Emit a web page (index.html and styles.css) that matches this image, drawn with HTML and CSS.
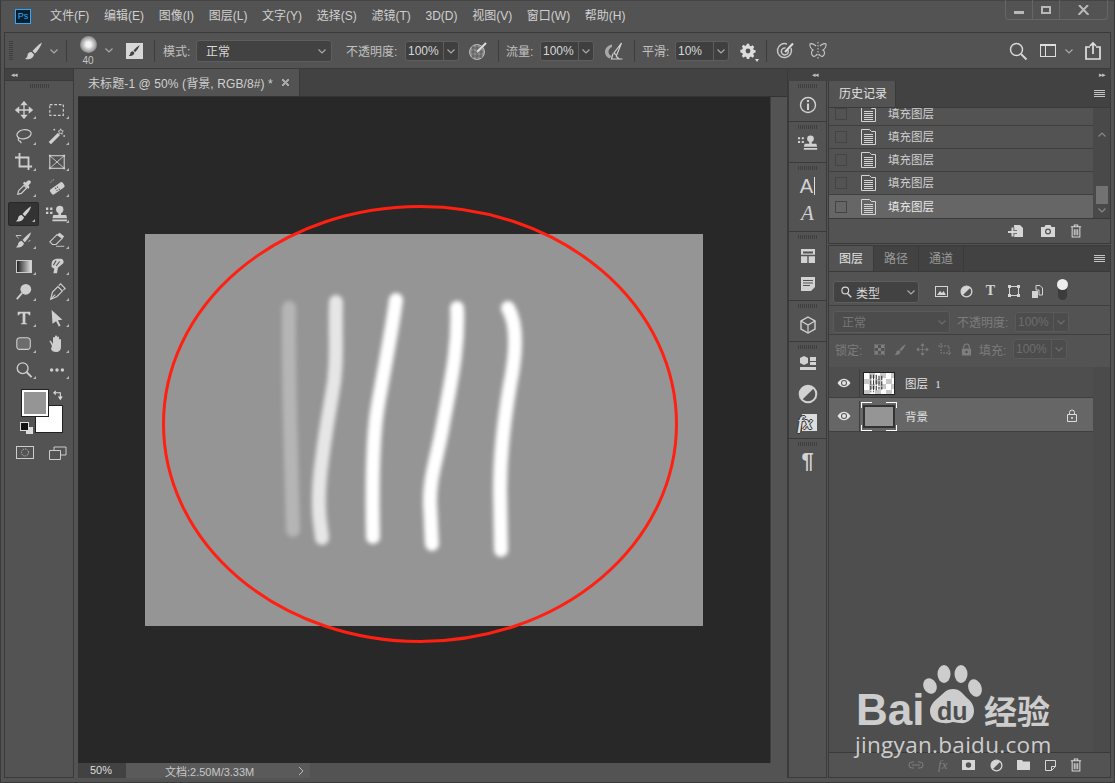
FILE: index.html
```html
<!DOCTYPE html>
<html lang="zh">
<head>
<meta charset="utf-8">
<title>Photoshop</title>
<link rel="stylesheet" href="styles.css">
</head>
<body>
<svg class="sprite" width="0" height="0">
  <defs>
    <symbol id="brush" viewBox="0 0 20 20"><path d="M18 1.500c-3.500 2-7 5.500-9.500 8.500l2.500 2.500c3-3 5.500-6.500 7-11z" fill="currentColor"/><path d="M7.500 11c-2.500 0-4 1.500-4 3.500 0 1.300-1 2.500-2.500 3.500 3.500 1 8 0 9-4.500z" fill="currentColor"/></symbol>
    <symbol id="chev" viewBox="0 0 10 10"><path d="M1.500 3.500L5 7l3.500-3.500" fill="none" stroke="currentColor" stroke-width="1.200"/></symbol>
    <symbol id="up" viewBox="0 0 10 10"><path d="M1.500 6.500L5 3l3.500 3.500" fill="none" stroke="currentColor" stroke-width="1.200"/></symbol>
    <symbol id="trash" viewBox="0 0 14 16"><path d="M1 3h12M5 3V1h4v2M2.500 3v12h9V3M5 6v7M7 6v7M9 6v7" fill="none" stroke="currentColor" stroke-width="1.200"/></symbol>
    <symbol id="doc" viewBox="0 0 15 16"><path d="M.5 15.500V.5h8l2 2h4v13z" fill="none" stroke="currentColor"/><path d="M3 5.500h9M3 7.500h9M3 9.500h9M3 11.500h9M3 13.500h9" stroke="currentColor"/></symbol>
    <symbol id="eye" viewBox="0 0 14 10"><path d="M.5 5C2.500 1.800 4.800.8 7 .8S11.500 1.800 13.500 5C11.500 8.200 9.200 9.200 7 9.200S2.500 8.200.5 5z" fill="currentColor"/><circle cx="7" cy="5" r="3" fill="#535353"/><circle cx="7" cy="5" r="2" fill="currentColor"/></symbol>
    <symbol id="menu" viewBox="0 0 11 8"><path d="M0 .5h11M0 2.500h11M0 4.500h11M0 6.500h11" stroke="currentColor"/></symbol>
    <symbol id="halfc" viewBox="0 0 14 14"><circle cx="7" cy="7" r="5.800" fill="none" stroke="currentColor" stroke-width="1.400"/><path d="M2.900 11.100L11.100 2.900A5.800 5.800 0 0 0 2.900 11.100z" fill="currentColor"/></symbol>
    <symbol id="lock" viewBox="0 0 12 14"><path d="M3 6V4a3 3 0 0 1 6 0v2" fill="none" stroke="currentColor" stroke-width="1.300"/><rect x="1" y="6" width="10" height="7.500" fill="currentColor"/><circle cx="6" cy="9.700" r="1.300" fill="#4e4e4e"/></symbol>
    <symbol id="spot" viewBox="0 0 16 16"><circle cx="7" cy="6" r="4.500" fill="none" stroke="currentColor" stroke-width="1.500"/><path d="M10 10l5 5" stroke="currentColor" stroke-width="1.800"/></symbol>
    <symbol id="stamp" viewBox="0 0 24 20"><path d="M0 3h2.500v2.500H0zM4.500 3H7v2.500H4.500zM0 7.500h2.500V10H0zM4.500 7.500H7V10H4.500z" fill="currentColor"/><circle cx="15" cy="5" r="4" fill="currentColor"/><path d="M13.500 8h3v3h5.500l1 3.500H7l1-3.500h5.500zM7 16h16v2H7z" fill="currentColor"/></symbol>
    <symbol id="grip" viewBox="0 0 19 4"><path d="M.5 0v4M2.500 0v4M4.500 0v4M6.500 0v4M8.500 0v4M10.500 0v4M12.500 0v4M14.500 0v4M16.500 0v4M18.500 0v4" stroke="currentColor"/></symbol>
  </defs>
</svg>

<div class="app">
  <header class="titlebar">
    <div class="ps-logo">Ps</div>
    <nav class="menu">
      <span>文件(F)</span><span>编辑(E)</span><span>图像(I)</span><span>图层(L)</span><span>文字(Y)</span><span>选择(S)</span><span>滤镜(T)</span><span>3D(D)</span><span>视图(V)</span><span>窗口(W)</span><span>帮助(H)</span>
    </nav>
    <div class="winbtns">
      <div class="winbtn"><span class="min"></span></div>
      <div class="winbtn"><span class="max"></span></div>
      <div class="winbtn wide"><svg width="11" height="10" viewBox="0 0 11 10"><path d="M1 0l9.500 10M10 0L.5 10" stroke="currentColor" stroke-width="2"/></svg></div>
    </div>
  </header>

  <div class="options">
    <div class="opt-grip"></div>
    <svg class="ic o-brush"><use href="#brush"/></svg>
    <svg class="chev o-chev1"><use href="#chev"/></svg>
    <div class="vsep s1"></div>
    <div class="brush-prev"><div class="brush-dot"></div><span>40</span></div>
    <svg class="chev o-chev2"><use href="#chev"/></svg>
    <div class="brush-panel"><svg width="13" height="13"><use href="#brush"/></svg></div>
    <div class="vsep s2"></div>
    <label class="lbl l-mode">模式:</label>
    <div class="sel s-mode"><span>正常</span><svg class="chev"><use href="#chev"/></svg></div>
    <label class="lbl l-op">不透明度:</label>
    <div class="num"><span>100%</span><i><svg class="chev"><use href="#chev"/></svg></i></div>
    <svg class="ic o-air" viewBox="0 0 20 20"><circle cx="9" cy="11" r="7.500" fill="#8a8a8a" stroke="#bbb"/><path d="M3 11h12M4 7h10M4 15h10M9 4v14M5 5v12M13 5v12" stroke="#5c5c5c"/><path d="M9 11l9-9" stroke="#ddd" stroke-width="2"/></svg>
    <div class="vsep s3"></div>
    <label class="lbl l-flow">流量:</label>
    <div class="num"><span>100%</span><i><svg class="chev"><use href="#chev"/></svg></i></div>
    <svg class="ic o-air2" viewBox="0 0 20 20"><path d="M8 3.500C3 4.500 1 8 1 11c0 3 2 5.500 4.500 6.500L7.500 15C5.500 14 4.500 12.500 4.500 10.500 4.500 8.500 6 7 8 6z" fill="#a8a8a8"/><path d="M17.500 2L10 12l2.500 2.500zM9 12.500l-1.500 5.500h11M12 15l3 3" fill="none" stroke="#d0d0d0" stroke-width="1.200"/></svg>
    <div class="vsep s4"></div>
    <label class="lbl l-smooth">平滑:</label>
    <div class="num"><span>10%</span><i><svg class="chev"><use href="#chev"/></svg></i></div>
    <div class="gear-wrap"><svg class="o-gear" viewBox="0 0 20 20"><path d="M8.500 1h3l.5 2.400 1.700.7 2-1.300 2.100 2.100-1.300 2 .7 1.700 2.300.4v3l-2.300.5-.7 1.700 1.300 2-2.100 2.100-2-1.300-1.700.7-.5 2.300h-3l-.4-2.300-1.700-.7-2 1.300-2.100-2.100 1.300-2-.7-1.700-2.400-.5V8.500l2.400-.4.7-1.700-1.300-2 2.100-2.100 2 1.300 1.700-.7z" fill="#ddd"/><circle cx="10" cy="10" r="3" fill="#535353"/></svg></div>
    <div class="vsep s5"></div>
    <svg class="ic o-target" viewBox="0 0 20 20"><path d="M15 7a7 7 0 1 1-4-4M12 9a3.500 3.500 0 1 1-2.500-2" fill="none" stroke="#c8c8c8" stroke-width="1.500"/><path d="M9 11l8-8.500" stroke="#ddd" stroke-width="2"/></svg>
    <svg class="ic o-fly" viewBox="0 0 20 20"><path d="M8 5C6 3 3 2 2 3c-.5 2 1 5 3 6-2 1-2 5 0 6 1 1 3 0 4-2M12 5c2-2 5-3 6-2 .5 2-1 5-3 6 2 1 2 5 0 6-1 1-3 0-4-2" fill="none" stroke="#c8c8c8" stroke-width="1.100"/><path d="M10 1v18" stroke="#c8c8c8" stroke-dasharray="1.500 1.500"/></svg>
    <svg class="ic o-search" viewBox="0 0 20 20"><circle cx="8.500" cy="8.500" r="6" fill="none" stroke="#d8d8d8" stroke-width="1.500"/><path d="M13 13l5.500 5.500" stroke="#d8d8d8" stroke-width="1.800"/></svg>
    <div class="o-work"><span></span></div>
    <svg class="chev o-chev3"><use href="#chev"/></svg>
    <svg class="ic o-share" viewBox="0 0 20 20"><path d="M7 6H3v12h14V6h-4" fill="none" stroke="#e0e0e0" stroke-width="1.700"/><path d="M10 13V2M7 5l3-3 3 3" fill="none" stroke="#e0e0e0" stroke-width="1.700"/></svg>
  </div>

  <div class="workspace">
    <aside class="tools">
      <div class="strip"><span class="arrows">◂◂</span></div>
      <svg class="grip-t"><use href="#grip"/></svg>
      <div class="tool-grid">
        <div class="t corner"><svg viewBox="0 0 20 20"><path d="M10 1v18M1 10h18M10 1L7.500 4h5zM10 19l-2.500-3h5zM1 10l3-2.500v5zM19 10l-3-2.500v5z" fill="currentColor" stroke="currentColor" stroke-width="1.500"/></svg></div>
        <div class="t corner"><svg viewBox="0 0 20 20"><rect x="2" y="4" width="15" height="12" fill="none" stroke="currentColor" stroke-width="1.300" stroke-dasharray="3 2"/></svg></div>
        <div class="t corner"><svg viewBox="0 0 20 20"><ellipse cx="10" cy="8" rx="8" ry="5" transform="rotate(-10 10 8)" fill="none" stroke="currentColor" stroke-width="1.300"/><path d="M4 12c-1 2 0 4 2 4l1 2" fill="none" stroke="currentColor" stroke-width="1.300"/></svg></div>
        <div class="t corner"><svg viewBox="0 0 20 20"><path d="M2 18L12 8" stroke="currentColor" stroke-width="3.500"/><path d="M14 2l1 2 2 .5-1.500 1.500.3 2-1.800-1-1.800 1 .3-2-1-1.500 2-.5zM6 3h2M7 2v2M18 9v2M17 10h2" stroke="currentColor" fill="none" stroke-width="1"/></svg></div>
        <div class="t corner"><svg viewBox="0 0 20 20"><path d="M0 5h15v14M5 0v15h14" fill="none" stroke="currentColor" stroke-width="2"/></svg></div>
        <div class="t corner"><svg viewBox="0 0 20 20"><rect x="2" y="3" width="16" height="14" fill="none" stroke="currentColor" stroke-width="1.200"/><path d="M2 3l16 14M18 3L2 17" stroke="currentColor"/><path d="M1 2h2v2H1zM17 2h2v2h-2zM1 16h2v2H1zM17 16h2v2h-2z" fill="currentColor"/></svg></div>
        <div class="t corner"><svg viewBox="0 0 20 20"><path d="M3 17l1-4 6-6 3 3-6 6z" fill="none" stroke="currentColor" stroke-width="1.300"/><path d="M9 5l6 6 1-2-1-2 2-2a2 2 0 0 0-3-3l-2 2-2-1z" fill="currentColor"/></svg></div>
        <div class="t corner"><svg viewBox="0 0 20 20"><rect x="1.500" y="7" width="17" height="7" rx="2" transform="rotate(-35 10 10)" fill="currentColor"/><path d="M8 10l1 1M10 8.500l1 1M9.500 12l1 1M12 11l1 1" stroke="#535353" stroke-width="1.300"/><path d="M3 4a4 4 0 0 1 4-3" fill="none" stroke="currentColor" stroke-dasharray="1 1"/></svg></div>
        <div class="t corner on"><svg viewBox="0 0 20 20"><use href="#brush"/></svg></div>
        <div class="t corner t-wide"><svg viewBox="0 0 24 20"><use href="#stamp"/></svg></div>
        <div class="t corner"><svg viewBox="0 0 20 20"><use href="#brush"/><path d="M1 5h6M1 5l3 3M15 12l2-2" stroke="currentColor" fill="none"/></svg></div>
        <div class="t corner"><svg viewBox="0 0 20 20"><path d="M2 12l8-8 6 4-7 7H5z" fill="none" stroke="currentColor" stroke-width="1.200"/><path d="M10 4l3-2 5 4-2 2z" fill="currentColor"/><path d="M9 17h9" stroke="currentColor"/></svg></div>
        <div class="t corner"><div class="grad"></div></div>
        <div class="t corner"><svg viewBox="0 0 20 20"><path d="M4 8c0-4 3-6 7-6h4c2 1 3 3 2 5l-6 5-1 6H6l1-5-3-2z" fill="currentColor"/><path d="M9 4l-3 5M13 5l-4 5" stroke="#535353" stroke-width="1.200"/></svg></div>
        <div class="t corner"><svg viewBox="0 0 20 20"><path d="M2 18l6-7" stroke="currentColor" stroke-width="2"/><circle cx="12" cy="7" r="6" fill="currentColor"/></svg></div>
        <div class="t corner"><svg viewBox="0 0 20 20"><path d="M3 18l2-8 6-6 5 5-6 6z" fill="none" stroke="currentColor" stroke-width="1.300"/><path d="M3 18l5-5M12 3l2-2 5 5-2 2" stroke="currentColor" fill="none" stroke-width="1.300"/></svg></div>
        <div class="t corner"><svg viewBox="0 0 20 20"><path d="M3 3h14v4h-1.500c-.5-1.500-1-2-2.500-2h-1.500v10.500l2 .5v1H6.500v-1l2-.5V5H7C5.500 5 5 5.500 4.500 7H3z" fill="currentColor"/></svg></div>
        <div class="t corner"><svg viewBox="0 0 20 20"><path d="M4 1l12 11-5 .5 3 6-2 1-3-6-4 3z" fill="currentColor"/></svg></div>
        <div class="t corner"><svg viewBox="0 0 20 20"><rect x="2" y="3" width="15" height="13" rx="3.500" fill="#6c6c6c" stroke="currentColor" stroke-width="1.200"/></svg></div>
        <div class="t corner t-wide"><svg viewBox="0 0 20 20"><path d="M5 12L3 8c-1-1.500 0-2 1-1l2 3V4c0-1.500 2-1.500 2 0v4V2.500c0-1.500 2-1.500 2 0V8V3.500c0-1.500 2-1.500 2 0V9V6c0-1.500 2-1.500 2 0v7c0 3-2 5-5 5s-4-1-5-3z" fill="currentColor"/></svg></div>
        <div class="t corner"><svg viewBox="0 0 20 20"><circle cx="8.500" cy="8" r="6" fill="none" stroke="currentColor" stroke-width="1.500"/><path d="M13 12.500l5.500 5.500" stroke="currentColor" stroke-width="2"/></svg></div>
        <div class="t corner"><svg viewBox="0 0 20 20"><circle cx="4" cy="10" r="1.900" fill="currentColor"/><circle cx="10" cy="10" r="1.900" fill="currentColor"/><circle cx="16" cy="10" r="1.900" fill="currentColor"/></svg></div>
      </div>
      <div class="swatches">
        <div class="bg-sw"></div>
        <div class="fg-sw"></div>
        <svg class="swap" viewBox="0 0 12 12"><path d="M1 3h7v6M6 7l2 3 2-3M3 1L1 3l2 2" fill="none" stroke="#ddd" stroke-width="1.200"/></svg>
        <div class="def-bg"></div>
        <div class="def-fg"></div>
      </div>
      <div class="tool-bottom">
        <svg width="18" height="14" viewBox="0 0 18 14"><rect x=".5" y=".5" width="17" height="12" fill="none" stroke="#ccc"/><circle cx="9" cy="6.500" r="3.500" fill="none" stroke="#ccc" stroke-dasharray="1 1"/></svg>
        <svg width="18" height="14" viewBox="0 0 18 14"><path d="M5 4V1h12v8h-5M.5 4.500h11v9H.5z" fill="none" stroke="#ccc"/></svg>
      </div>
    </aside>

    <main class="doc">
      <div class="tabs">
        <div class="tab"><span>未标题-1 @ 50% (背景, RGB/8#) *</span><b></b></div>
      </div>
      <div class="stage">
        <svg class="canvas" viewBox="78 97 692 666" width="692" height="666">
          <defs><filter id="soft" x="-30%" y="-5%" width="160%" height="110%"><feGaussianBlur stdDeviation="2"/></filter></defs>
          <rect x="145" y="234" width="558" height="392" fill="#959595"/>
          <g fill="none" stroke-linecap="round" stroke-width="14" filter="url(#soft)">
            <path d="M289 308C288 380 291 450 293 530" stroke="#b5b5b5"/>
            <path d="M336 302C335 340 338 365 332 395C326 430 319 470 319 495C318 520 321 525 322 538" stroke="#e6e6e6"/>
            <path d="M396 300C392 330 384 370 378 405C372 440 372 490 373 537" stroke="#fff"/>
            <path d="M457 308C459 350 450 385 442 430C436 462 429 480 430 505C431 520 431 530 432 544" stroke="#fff"/>
            <path d="M508 308C518 325 516 355 510 385C504 420 500 450 500 490L501 550" stroke="#fff"/>
          </g>
          <ellipse cx="420" cy="424" rx="256.500" ry="217.500" fill="none" stroke="#ff2012" stroke-width="3"/>
        </svg>
        <div class="vscroll"></div>
      </div>
      <div class="status">
        <span class="zoom">50%</span>
        <div class="info"><span>文档:2.50M/3.33M</span><svg width="6" height="10" viewBox="0 0 6 10"><path d="M1 1l4 4-4 4" fill="none" stroke="#bbb"/></svg></div>
      </div>
    </main>

    <div class="right">
      <div class="strip strip-r"><span class="arrows a-l">◂◂</span><span class="arrows a-r">▸▸</span></div>
      <div class="right-body">
        <div class="dock">
          <section class="dk h41"><svg class="grip-d"><use href="#grip"/></svg><svg class="di" viewBox="0 0 20 20"><circle cx="10" cy="10" r="7.500" fill="none" stroke="currentColor" stroke-width="1.400"/><path d="M9 5h2v2H9zM9 8.500h2V15H9z" fill="currentColor"/></svg></section>
          <section class="dk h41"><svg class="grip-d"><use href="#grip"/></svg><svg class="di up3" viewBox="0 0 24 20"><use href="#stamp"/></svg></section>
          <section class="dk h69"><svg class="grip-d"><use href="#grip"/></svg><div class="glyph-a">A<em></em></div><div class="glyph-fancy">A</div></section>
          <section class="dk h69"><svg class="grip-d"><use href="#grip"/></svg>
            <svg class="di" viewBox="0 0 20 20"><path d="M3 3h14v14H3z" fill="currentColor"/><path d="M3 9.500h14M10 9.500V17" stroke="#535353" stroke-width="1.400"/><path d="M5 5.500h10v2H5z" fill="#535353"/></svg>
            <svg class="di" viewBox="0 0 20 20"><path d="M3 3h14v10l-4 4H3z" fill="currentColor"/><path d="M5 6.500h10M5 9h10M5 11.500h7" stroke="#535353"/></svg>
          </section>
          <section class="dk h41"><svg class="grip-d"><use href="#grip"/></svg><svg class="di" viewBox="0 0 20 20"><path d="M10 2l7 4v8l-7 4-7-4V6z" fill="none" stroke="currentColor" stroke-width="1.400"/><path d="M3 6l7 4 7-4M10 10v8" fill="none" stroke="currentColor" stroke-width="1.200"/></svg></section>
          <section class="dk h97"><svg class="grip-d"><use href="#grip"/></svg>
            <svg class="di up2" viewBox="0 0 20 20"><path d="M6 2l4 2v5l-4 2-4-2V4zM12 3h6v4h-6zM12 8h6v3h-6zM2 13h16v3H2z" fill="currentColor"/></svg>
            <svg class="di" viewBox="0 0 14 14"><use href="#halfc"/></svg>
            <div class="fx-box"><span>fx</span></div>
          </section>
          <section class="dk grow"><svg class="grip-d"><use href="#grip"/></svg><div class="pilcrow">¶</div></section>
        </div>

        <div class="panels">
          <section class="panel history">
            <div class="ptabs">
              <div class="ptab active">历史记录</div>
              <svg class="pmenu"><use href="#menu"/></svg>
            </div>
            <div class="hist-body">
              <div class="hist-list">
                <div class="hrow"><i class="cb"></i><svg class="hdoc"><use href="#doc"/></svg><span>填充图层</span></div>
                <div class="hrow"><i class="cb"></i><svg class="hdoc"><use href="#doc"/></svg><span>填充图层</span></div>
                <div class="hrow"><i class="cb"></i><svg class="hdoc"><use href="#doc"/></svg><span>填充图层</span></div>
                <div class="hrow"><i class="cb"></i><svg class="hdoc"><use href="#doc"/></svg><span>填充图层</span></div>
                <div class="hrow sel-row"><i class="cb"></i><svg class="hdoc"><use href="#doc"/></svg><span>填充图层</span></div>
              </div>
              <div class="hscroll">
                <svg class="sa"><use href="#up"/></svg>
                <div class="thumb"></div>
                <svg class="sa"><use href="#chev"/></svg>
              </div>
            </div>
            <div class="pfoot pf-hist">
              <svg class="f-new" width="15" height="13" viewBox="0 0 15 13"><path d="M6 0h6l3 3v9H6z" fill="currentColor"/><path d="M0 7h9M4.500 2.500v9" stroke="#535353" stroke-width="3.600"/><path d="M0 7h9M4.500 2.500v9" stroke="currentColor" stroke-width="2"/></svg>
              <svg width="14" height="12" viewBox="0 0 14 12"><path d="M0 2h3.500l1-2h5l1 2H14v10H0z" fill="currentColor"/><circle cx="7" cy="6.500" r="3" fill="#535353"/><circle cx="7" cy="6.500" r="1.700" fill="currentColor"/></svg>
              <svg width="12" height="14"><use href="#trash"/></svg>
            </div>
          </section>

          <section class="panel layers">
            <div class="ptabs">
              <div class="ptab active">图层</div>
              <div class="ptab">路径</div>
              <div class="ptab">通道</div>
              <svg class="pmenu"><use href="#menu"/></svg>
            </div>
            <div class="lrow-filter">
              <div class="sel s-filter"><svg width="12" height="12" viewBox="0 0 16 16"><use href="#spot"/></svg><span>类型</span><svg class="chev"><use href="#chev"/></svg></div>
              <div class="f-icons">
                <svg width="13" height="11" viewBox="0 0 13 11"><rect x=".5" y=".5" width="12" height="10" fill="none" stroke="currentColor"/><path d="M2 9l3-4 2 2 1.500-2L11 9z" fill="currentColor"/></svg>
                <svg width="13" height="13"><use href="#halfc"/></svg>
                <div class="f-t">T</div>
                <svg width="12" height="12" viewBox="0 0 12 12"><rect x="1.500" y="1.500" width="9" height="9" fill="none" stroke="currentColor"/><path d="M0 0h3v3H0zM9 0h3v3H9zM0 9h3v3H0zM9 9h3v3H9z" fill="currentColor"/></svg>
                <svg width="11" height="13" viewBox="0 0 11 13"><path d="M4 .5h4l2.500 2.500v7H7V5H4z" fill="none" stroke="currentColor"/><rect x="0" y="6" width="6" height="7" fill="currentColor"/></svg>
                <div class="toggle"><b></b></div>
              </div>
            </div>
            <div class="lrow-blend dim">
              <div class="sel s-blend"><span>正常</span><svg class="chev"><use href="#chev"/></svg></div>
              <label class="lbl d1">不透明度:</label>
              <div class="num n-dim"><span>100%</span><i><svg class="chev"><use href="#chev"/></svg></i></div>
            </div>
            <div class="lrow-lock dim">
              <label class="lbl d2">锁定:</label>
              <div class="lk-icons">
                <svg width="11" height="11" viewBox="0 0 11 11"><path d="M0 0h11v11H0z" fill="none" stroke="currentColor"/><path d="M1 1h3v3H1zM7 1h3v3H7zM4 4h3v3H4zM1 7h3v3H1zM7 7h3v3H7z" fill="currentColor"/></svg>
                <svg width="13" height="13"><use href="#brush"/></svg>
                <svg width="13" height="13" viewBox="0 0 20 20"><path d="M10 1v18M1 10h18M10 1L7.500 4h5zM10 19l-2.500-3h5zM1 10l3-2.500v5zM19 10l-3-2.500v5z" fill="currentColor" stroke="currentColor"/></svg>
                <svg width="14" height="13" viewBox="0 0 14 13"><path d="M0 3h11v10M3 0v10h11" fill="none" stroke="currentColor" stroke-dasharray="2 1"/></svg>
                <svg width="11" height="13"><use href="#lock"/></svg>
              </div>
              <label class="lbl d3">填充:</label>
              <div class="num n-dim"><span>100%</span><i><svg class="chev"><use href="#chev"/></svg></i></div>
            </div>
            <div class="lay-body">
              <div class="lay-list">
                <div class="layer">
                  <div class="eye"><svg width="14" height="10"><use href="#eye"/></svg></div>
                  <div class="thumb-l check"><svg viewBox="0 0 32 23" width="30" height="21"><path d="M7 2v19M10 2v19M13 2v17M16 3v15M19 3v15" stroke="#333" stroke-width="1.200" stroke-dasharray="5 1"/></svg></div>
                  <span class="lname">图层 <em>1</em></span>
                </div>
                <div class="layer cur">
                  <div class="eye"><svg width="14" height="10"><use href="#eye"/></svg></div>
                  <div class="thumb-l gray"><i class="c tl"></i><i class="c tr"></i><i class="c bl"></i><i class="c br"></i></div>
                  <span class="lname">背景</span>
                  <svg class="lay-lock" width="10" height="13" viewBox="0 0 10 13"><path d="M2.500 5.500V3.500a2.500 2.500 0 0 1 5 0v2M.5 5.500h9v7h-9z" fill="none" stroke="#ddd"/><circle cx="5" cy="9" r="1" fill="#ddd"/></svg>
                </div>
              </div>
              <div class="lay-scroll"></div>
            </div>
            <div class="pfoot pf-lay">
              <svg class="f-d" width="16" height="8" viewBox="0 0 16 8"><path d="M6 1H4a3 3 0 0 0 0 6h2M10 1h2a3 3 0 0 1 0 6h-2M4 4h8" fill="none" stroke="currentColor"/></svg>
              <span class="fx-d">fx</span>
              <svg width="13" height="10" viewBox="0 0 13 10"><path d="M0 0h13v10H0z" fill="currentColor"/><circle cx="6.500" cy="5" r="2.700" fill="#535353"/></svg>
              <svg width="13" height="13"><use href="#halfc"/></svg>
              <svg width="13" height="10" viewBox="0 0 13 10"><path d="M0 0h5l1 1.500h7V10H0z" fill="currentColor"/></svg>
              <svg width="11" height="11" viewBox="0 0 11 11"><path d="M.5 .5h10v6l-4 4h-6zM6.500 10.500v-4h4" fill="none" stroke="currentColor"/></svg>
              <svg width="12" height="14"><use href="#trash"/></svg>
            </div>
          </section>
        </div>
      </div>
    </div>
  </div>

  <div class="watermark">
    <span class="wm-bai">Bai</span>
    <svg class="wm-paw" viewBox="0 0 60 63"><ellipse cx="7" cy="24" rx="6.500" ry="8" transform="rotate(-25 7 24)"/><ellipse cx="21" cy="12" rx="6.500" ry="9"/><ellipse cx="38" cy="12" rx="6.500" ry="9"/><ellipse cx="52" cy="26" rx="6.500" ry="9" transform="rotate(-20 52 26)"/><path d="M30 27c7 0 10 5 14 9 5 4 7 8 7 13 0 8-7 13-14 12-3 0-5-1-7-1s-5 2-9 1C12 61 7 56 7 49c0-5 3-9 8-13 5-4 8-9 15-9z"/></svg>
    <span class="wm-du">du</span>
    <span class="wm-jy">经验</span>
    <span class="wm-url">jingyan.baidu.com</span>
  </div>
</div>
</body>
</html>
```
FILE: styles.css
```css
* { box-sizing: border-box; }
html, body { margin: 0; padding: 0; height: 100%; overflow: hidden; }
body {
  background: #535353;
  color: #d2d2d2;
  font: 12px "Liberation Sans", "Noto Sans CJK SC", sans-serif;
}
.sprite { position: absolute; }
svg { display: block; flex: none; }
.app {
  position: relative;
  width: 1115px;
  height: 783px;
  display: flex;
  flex-direction: column;
  background: #535353;
  border: 1px solid #3a3a3a;
  border-top-color: #444;
}

/* title bar */
.titlebar { height: 31px; display: flex; align-items: center; flex: none; position: relative; }
.ps-logo {
  width: 16px; height: 15px; margin-left: 14px; margin-top: -1px;
  background: #06202e;
  border: 1px solid #31a8ff;
  color: #31a8ff;
  font-size: 9px;
  line-height: 13px;
  text-align: center;
}
.menu { display: flex; align-items: baseline; gap: 14.7px; margin-left: 19px; color: #d0d0d0; margin-top: -1px; line-height: 16px; }
.winbtns {
  position: absolute; top: -1px; right: 6px;
  display: flex; height: 20px;
  border: 1px solid #666; border-top: 0;
  border-radius: 0 0 4px 4px;
}
.winbtn { width: 27px; display: flex; align-items: center; justify-content: center; border-right: 1px solid #666; color: #b8b8b8; }
.winbtn.wide { width: 47px; border-right: 0; }
.min { display: block; width: 10px; height: 3px; background: #b8b8b8; margin-top: 6px; }
.max { display: block; width: 10px; height: 8px; border: 2px solid #b8b8b8; }

/* options */
.options {
  height: 37px; flex: none;
  display: flex; align-items: center;
  margin: 0 3px;
  border: 1px solid #3a3a3a;
  color: #c6c6c6;
}
.opt-grip { width: 4px; height: 20px; margin-left: 4px; background: repeating-linear-gradient(#3f3f3f 0 1px, transparent 1px 2px); }
.ic { width: 20px; height: 20px; color: #d0d0d0; }
.chev { width: 10px; height: 10px; color: #aaa; }
.o-brush { margin-left: 11px; }
.o-chev1 { margin-left: 5px; }
.vsep { width: 1px; height: 22px; background: #3c3c3c; }
.s1 { margin-left: 7px; }
.brush-prev { width: 20px; margin-left: 11px; display: flex; flex-direction: column; align-items: center; margin-top: 1px; }
.brush-dot { width: 17px; height: 17px; border-radius: 50%; background: radial-gradient(#f4f4f4 0 20%, #aaa 55%, #6a6a6a 85%, #585858 100%); }
.brush-prev span { font-size: 10px; line-height: 12px; margin-top: 2px; color: #c8c8c8; }
.o-chev2 { margin-left: 6px; margin-top: -2px; }
.brush-panel {
  width: 17px; height: 16px; margin-left: 12px; background: #d8d8d8;
  display: flex; align-items: center; justify-content: center; color: #444;
}
.s2 { margin-left: 11px; }
.lbl { white-space: nowrap; color: #c0c0c0; }
.l-mode { margin-left: 8px; width: 33px; }
.sel {
  display: flex; align-items: center; justify-content: space-between;
  background: #424242; border: 1px solid #5e5e5e; border-radius: 3px;
  color: #d8d8d8;
}
.s-mode { width: 136px; height: 22px; padding: 0 4px 0 9px; }
.l-op { margin-left: 14px; width: 59px; }
.num {
  display: flex; width: 54px; height: 20px;
  background: #3f3f3f; border: 1px solid #5e5e5e; border-radius: 3px;
  line-height: 18px;
  color: #d8d8d8;
}
.num span { flex: 1; padding-left: 2px; }
.num i { width: 15px; border-left: 1px solid #5e5e5e; display: flex; align-items: center; justify-content: center; }
.o-air { margin-left: 9px; }
.s3 { margin-left: 10px; }
.l-flow { margin-left: 7px; width: 34px; }
.o-air2 { margin-left: 10px; }
.s4 { margin-left: 10px; }
.l-smooth { margin-left: 7px; width: 33px; }
.gear-wrap { width: 16px; height: 16px; margin-left: 11px; position: relative; }
.gear-wrap::after {
  content: ""; position: absolute; right: -3px; bottom: -3px;
  border-style: solid; border-width: 3px 2px 0 2px;
  border-color: #ddd transparent transparent transparent;
}
.o-gear { width: 16px; height: 16px; }
.s5 { margin-left: 10px; }
.o-target { margin-left: 9px; }
.o-fly { margin-left: 12px; }
.o-search { margin-left: 180px; }
.o-work { width: 16px; height: 13px; margin-left: 12px; border: 1px solid #ddd; border-top-width: 2px; }
.o-work span { display: block; width: 5px; height: 100%; border-right: 1px solid #ddd; }
.o-chev3 { margin-left: 8px; }
.o-share { margin-left: 9px; }

/* workspace */
.workspace { flex: 1; min-height: 0; display: flex; padding: 0 3px 4px; }
.strip { height: 12px; background: #424242; display: flex; align-items: center; position: relative; flex: none; }
.arrows { font-size: 7px; color: #c0c0c0; letter-spacing: -1px; line-height: 12px; }

/* tools */
.tools { width: 70px; display: flex; flex-direction: column; border: 1px solid #3a3a3a; border-width: 0 1px 1px 1px; flex: none; align-items: stretch; }
.tools .strip { padding-left: 6px; border-bottom: 1px solid #3a3a3a; }
.grip-t { width: 19px; height: 4px; color: #3f3f3f; margin: 3px auto 9px; }
.tool-grid { display: grid; grid-template-columns: 33px 33px; grid-auto-rows: 26px; margin-left: 2px; }
.t {
  position: relative; display: flex; align-items: center; justify-content: center;
  color: #cfcfcf;
  margin: 1px 1px;
}
.t svg { width: 18px; height: 18px; }
.t.t-wide svg { width: 22px; height: 20px; }
.t.corner::after {
  content: ""; position: absolute; right: 3px; bottom: 3px;
  border-style: solid; border-width: 0 0 3px 3px;
  border-color: transparent transparent #b8b8b8 transparent;
}
.t.on { background: #333; border: 1px solid #282828; border-radius: 2px; }
.grad { width: 16px; height: 13px; border: 1px solid #ccc; background: linear-gradient(90deg, #222, #ddd); }
.swatches { position: relative; height: 44px; margin-top: 7px; }
.fg-sw { position: absolute; left: 17px; top: 0; width: 26px; height: 26px; background: #959595; border: 2px solid #fff; outline: 1px solid #222; }
.bg-sw { position: absolute; left: 31px; top: 16px; width: 26px; height: 26px; background: #fff; outline: 1px solid #222; }
.swap { position: absolute; left: 48px; top: 0; width: 11px; height: 11px; }
.def-bg { position: absolute; left: 21px; top: 37px; width: 7px; height: 7px; background: #ddd; }
.def-fg { position: absolute; left: 16px; top: 33px; width: 7px; height: 7px; background: #111; outline: 1px solid #ddd; }
.tool-bottom { display: flex; justify-content: space-between; padding: 0 6px 0 11px; margin-top: 12px; }

/* document */
.doc { flex: 1; min-width: 0; display: flex; flex-direction: column; margin-left: 4px; border-right: 1px solid #3a3a3a; }
.tabs { height: 28px; background: #424242; flex: none; display: flex; border-bottom: 1px solid #333; }
.tab { width: 222px; background: #535353; display: flex; align-items: center; padding-left: 10px; color: #d0d0d0; border-right: 1px solid #3a3a3a; letter-spacing: .1px; }
.tab b {
  display: block; width: 7px; height: 7px; margin-left: 9px;
  background: linear-gradient(45deg, transparent 38%, #a8a8a8 38% 62%, transparent 62%), linear-gradient(-45deg, transparent 38%, #a8a8a8 38% 62%, transparent 62%);
}
.stage { flex: 1; min-height: 0; display: flex; background: #282828; position: relative; overflow: hidden; }
.canvas { flex: none; }
.vscroll { flex: 1; background: #535353; border-left: 1px solid #3f3f3f; }
.status { height: 15px; display: flex; flex: none; background: #535353; }
.zoom { width: 48px; background: #424242; padding-left: 12px; line-height: 15px; font-size: 11px; color: #ddd; flex: none; }
.info { width: 184px; display: flex; justify-content: space-between; align-items: center; padding: 0 6px 0 39px; color: #c8c8c8; font-size: 11px; background: #5a5a5a; }

/* right */
.right { width: 323px; display: flex; flex-direction: column; flex: none; margin-left: 0; }
.strip-r { justify-content: space-between; padding: 0 6px 0 24px; }
.right-body { flex: 1; min-height: 0; display: flex; }
.dock { width: 39px; display: flex; flex-direction: column; flex: none; border-left: 1px solid #3a3a3a; border-right: 1px solid #3a3a3a; border-bottom: 1px solid #3a3a3a; }
.dk { display: flex; flex-direction: column; align-items: center; border-bottom: 1px solid #3a3a3a; color: #d2d2d2; position: relative; }
.h41 { height: 41px; }
.h69 { height: 69px; }
.h97 { height: 97px; }
.grow { flex: 1; border-bottom: 0; }
.grip-d { width: 19px; height: 4px; color: #3f3f3f; margin: 3px 0 7px; }
.di { width: 20px; height: 20px; margin-bottom: 8px; }
.h41 .di { margin-bottom: 0; }
.up3 { margin-top: -3px; }
.up2 { margin-top: -2px; margin-bottom: 10px; }
.glyph-a { font-size: 20px; line-height: 22px; height: 24px; margin-top: -3px; display: flex; align-items: center; }
.glyph-a em { width: 1px; height: 18px; background: #ddd; margin-left: 1px; }
.glyph-fancy { font: italic 21px "Liberation Serif", serif; line-height: 24px; margin-top: 3px; }
.fx-box { width: 15px; height: 17px; background: #ddd; position: relative; margin-top: 2px; margin-left: 3px; }
.fx-box span { position: absolute; left: -4px; top: -2px; font: italic 700 18px/22px "Liberation Serif", serif; color: #ddd; text-shadow: 1px 0 #333, -1px 0 #333, 0 1px #333, 0 -1px #333; }
.pilcrow { font: 700 22px "Liberation Sans", sans-serif; line-height: 24px; margin-top: -4px; }

.panels { flex: 1; min-width: 0; display: flex; flex-direction: column; gap: 1px; margin-left: 1px; }
.panel { display: flex; flex-direction: column; border: 1px solid #3a3a3a; border-top: 0; }
.history { height: 163px; flex: none; }
.layers { flex: 1; min-height: 0; border-top: 1px solid #3a3a3a; }
.ptabs { height: 27px; background: #424242; display: flex; flex: none; position: relative; border-bottom: 1px solid #3a3a3a; }
.layers .ptabs { height: 26px; }
.ptab { padding: 0 0 0 10px; line-height: 27px; font-size: 12px; color: #9a9a9a; border-right: 1px solid #3a3a3a; width: 45px; white-space: nowrap; }
.ptab.active { background: #535353; color: #e2e2e2; }
.history .ptab { width: 67px; }
.pmenu { width: 11px; height: 8px; position: absolute; right: 5px; top: 9px; color: #c4c4c4; }
.hist-body { height: 110px; display: flex; flex: none; }
.hist-list { flex: 1; min-width: 0; display: flex; flex-direction: column; justify-content: flex-end; overflow: hidden; }
.hrow { flex: none; height: 23px; display: flex; align-items: center; padding-left: 6px; border-bottom: 1px solid #3f3f3f; color: #d0d0d0; }
.sel-row { background: #666; border-bottom: 0; color: #e8e8e8; }
.cb { width: 12px; height: 12px; border: 1px solid #444; flex: none; }
.hdoc { width: 15px; height: 16px; margin-left: 14px; color: #d4d4d4; }
.hrow span { margin-left: 12px; margin-top: -2px; font-size: 11.5px; }
.hscroll { width: 17px; background: #494949; display: flex; flex-direction: column; align-items: center; flex: none; justify-content: flex-end; padding-bottom: 3px; }
.sa { width: 10px; height: 10px; color: #888; }
.hscroll .sa:first-child { margin-bottom: 46px; }
.thumb { width: 12px; height: 18px; background: #727272; margin-bottom: 1px; }
.pfoot { flex: none; display: flex; align-items: center; color: #d6d6d6; border-top: 1px solid #3a3a3a; }
.pf-hist { flex: 1; justify-content: flex-end; gap: 15px; padding-right: 28px; }
.f-new { margin-right: 3px; }

.lrow-filter { height: 34px; display: flex; align-items: center; padding: 7px 0 0 4px; border-bottom: 1px solid #3f3f3f; flex: none; }
.s-filter { width: 86px; height: 22px; padding: 0 2px 0 6px; justify-content: flex-start; }
.s-filter span { margin-left: 4px; flex: 1; }
.f-icons { display: flex; align-items: center; color: #d4d4d4; gap: 12px; margin-left: 16px; margin-top: -2px; }
.f-t { font: 700 14px "Liberation Serif", serif; width: 11px; text-align: center; }
.toggle { width: 9px; height: 18px; background: #3c3c3c; border-radius: 5px; position: relative; margin-left: 3px; }
.toggle b { position: absolute; left: -1px; top: -3px; width: 11px; height: 11px; background: #eee; border-radius: 50%; }
.dim { color: #7a7a7a; }
.dim .lbl { color: #7c7c7c; }
.lrow-blend { height: 29px; display: flex; align-items: center; padding: 3px 0 0 4px; border-bottom: 1px solid #3f3f3f; flex: none; }
.s-blend { width: 117px; height: 22px; background: #4c4c4c; color: #767676; padding: 0 2px 0 8px; border-color: #5a5a5a; }
.s-blend .chev, .n-dim .chev { color: #6c6c6c; }
.d1 { margin-left: 7px; width: 58px; }
.n-dim { background: #4c4c4c; color: #6c6c6c; border-color: #5a5a5a; }
.n-dim i { border-color: #5a5a5a; }
.lrow-lock { height: 32px; display: flex; align-items: center; padding: 0 0 4px 6px; flex: none; }
.d2 { width: 39px; }
.lk-icons { display: flex; gap: 9px; align-items: center; color: #7e7e7e; }
.d3 { margin-left: 7px; width: 34px; }
.lay-body { flex: 1; min-height: 0; display: flex; background: #4e4e4e; }
.lay-list { flex: 1; min-width: 0; }
.lay-scroll { width: 17px; background: #4b4b4b; }
.layer { height: 31px; display: flex; align-items: center; border-bottom: 1px solid #3f3f3f; position: relative; color: #e0e0e0; padding-top: 2px; }
.layer + .layer { height: 34px; padding-top: 3px; }
.cur { background: #666; }
.eye { width: 31px; height: 100%; border-right: 1px solid #3f3f3f; display: flex; align-items: center; justify-content: center; color: #e4e4e4; }
.thumb-l { width: 32px; height: 23px; margin-left: 3px; border: 1px solid #222; position: relative; }
.check { background: repeating-conic-gradient(#c8c8c8 0 25%, #fff 0 50%) 0 0 / 11px 11px; }
.gray { background: #959595; border-width: 2px; border-color: #333; }
.c { position: absolute; width: 11px; height: 6px; border: 0 solid #fff; }
.tl { left: -4px; top: -5px; border-width: 1px 0 0 1px; }
.tr { right: -4px; top: -5px; border-width: 1px 1px 0 0; }
.bl { left: -4px; bottom: -5px; border-width: 0 0 1px 1px; }
.br { right: -4px; bottom: -5px; border-width: 0 1px 1px 0; }
.lname { margin-left: 10px; font-size: 11.5px; }
.lname em { font: 11px "Liberation Serif", serif; margin-left: 4px; color: #dfe6f5; }
.lay-lock { position: absolute; right: 16px; top: 11px; }
.pf-lay { height: 25px; justify-content: flex-end; gap: 14.500px; padding-right: 28px; }
.f-d { color: #7e7e7e; }
.fx-d { font: italic 13px "Liberation Serif", serif; color: #7e7e7e; }

/* watermark */
.watermark { position: absolute; left: 853px; top: 661px; width: 202px; height: 92px; color: #cdcdcd; pointer-events: none; }
.wm-bai { position: absolute; left: 2px; top: 23px; font: 700 44px/50px "Liberation Sans", sans-serif; }
.wm-paw { position: absolute; left: 69px; top: 0; width: 60px; height: 63px; fill: #cdcdcd; }
.wm-du { position: absolute; left: 83px; top: 34px; font: 700 25px/30px "Liberation Sans", sans-serif; color: #4e4e4e; }
.wm-jy { position: absolute; left: 130px; top: 25px; font: 700 33px/46px "Noto Sans CJK SC", sans-serif; }
.wm-url { position: absolute; left: 1px; top: 71px; font: 22.5px/24px "Open Sans", sans-serif; letter-spacing: .3px; white-space: nowrap; }
```
